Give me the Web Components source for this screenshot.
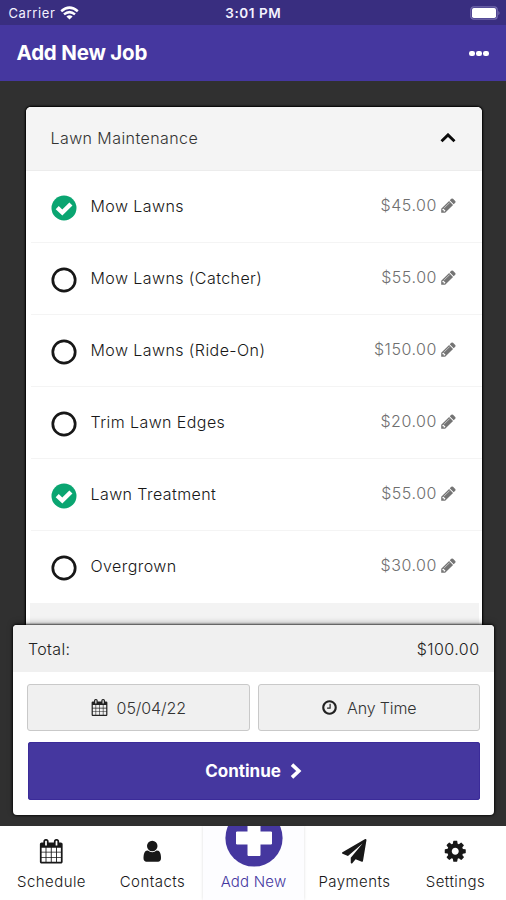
<!DOCTYPE html>
<html lang="en">
<head>
<meta charset="utf-8">
<title>Add New Job</title>
<style>
html,body{margin:0;height:100%;overflow:hidden}
body{font-family:Inter,"Liberation Sans",sans-serif;background:#303030;color:#2b2b2b}
</style>
</head>
<body>
<job-app></job-app>
<script>
const ICONS = {
  pencil:'M491 1536l91-91-235-235-91 91v107h128v128h107zm523-928q0-22-22-22-10 0-17 7l-542 542q-7 7-7 17 0 22 22 22 10 0 17-7l542-542q7-7 7-17zm-54-192l416 416-832 832h-416v-416zm683 96q0 53-37 90l-166 166-416-416 166-165q36-38 90-38 53 0 91 38l235 234q37 39 37 91z',
  calendar:'M192 1664h288v-288h-288v288zm352 0h320v-288h-320v288zm-352-352h288v-320h-288v320zm352 0h320v-320h-320v320zm-352-384h288v-288h-288v288zm736 736h320v-288h-320v288zm-384-736h320v-288h-320v288zm768 736h288v-288h-288v288zm-384-352h320v-320h-320v320zm-352-864v-288q0-13-9.5-22.5t-22.5-9.5h-64q-13 0-22.5 9.5t-9.5 22.5v288q0 13 9.5 22.5t22.5 9.5h64q13 0 22.5-9.5t9.5-22.5zm736 864h288v-320h-288v320zm-384-384h320v-288h-320v288zm384 0h288v-288h-288v288zm32-480v-288q0-13-9.5-22.5t-22.5-9.5h-64q-13 0-22.5 9.5t-9.5 22.5v288q0 13 9.5 22.5t22.5 9.5h64q13 0 22.5-9.5t9.5-22.5zm384-64v1280q0 52-38 90t-90 38h-1408q-52 0-90-38t-38-90v-1280q0-52 38-90t90-38h128v-96q0-66 47-113t113-47h64q66 0 113 47t47 113v96h384v-96q0-66 47-113t113-47h64q66 0 113 47t47 113v96h128q52 0 90 38t38 90z',
  clock:'M1024 544v448q0 14-9 23t-23 9h-320q-14 0-23-9t-9-23v-64q0-14 9-23t23-9h224v-352q0-14 9-23t23-9h64q14 0 23 9t9 23zm416 352q0-148-73-273t-198-198-273-73-273 73-198 198-73 273 73 273 198 198 273 73 273-73 198-198 73-273zm224 0q0 209-103 385.5t-279.5 279.5-385.5 103-385.5-103-279.5-279.5-103-385.5 103-385.5 279.5-279.5 385.5-103 385.5 103 279.5 279.5 103 385.5z',
  user:'M1536 1399q0 109-62.5 187t-150.5 78h-854q-88 0-150.5-78t-62.5-187q0-85 8.5-160.5t31.5-152 58.5-131 94-89 134.5-34.5q131 128 313 128t313-128q76 0 134.5 34.5t94 89 58.5 131 31.5 152 8.5 160.5zm-256-887q0 159-112.5 271.5t-271.5 112.5-271.5-112.5-112.5-271.5 112.5-271.5 271.5-112.5 271.5 112.5 112.5 271.5z',
  plane:'M1764 11q33 24 27 64l-256 1536q-5 29-32 45-14 8-31 8-11 0-24-5l-453-185-242 295q-18 23-49 23-13 0-22-4-19-7-30.5-23.5t-11.5-36.5v-349l864-1059-1069 925-395-162q-37-14-40-55-2-40 32-59l1664-960q15-9 32-9 20 0 36 11z',
  cog:'M1152 896q0-106-75-181t-181-75-181 75-75 181 75 181 181 75 181-75 75-181zm512-109v222q0 12-8 23t-20 13l-185 28q-19 54-39 91 35 50 107 138 10 12 10 25t-9 23q-27 37-99 108t-94 71q-12 0-26-9l-138-108q-44 23-91 38-16 136-29 186-7 28-36 28h-222q-14 0-24.5-8.5t-11.5-21.5l-28-184q-49-16-90-37l-141 107q-10 9-25 9-14 0-25-11-126-114-165-168-7-10-7-23 0-12 8-23 15-21 51-66.5t54-70.5q-27-50-41-99l-183-27q-13-2-21-12.5t-8-23.5v-222q0-12 8-23t19-13l186-28q14-46 39-92-40-57-107-138-10-12-10-24 0-10 9-23 26-36 98.5-107.5t94.5-71.5q13 0 26 10l138 107q44-23 91-38 16-136 29-186 7-28 36-28h222q14 0 24.5 8.5t11.5 21.5l28 184q49 16 90 37l142-107q9-9 24-9 13 0 25 10 129 119 165 170 7 8 7 22 0 12-8 23-15 21-51 66.5t-54 70.5q26 50 41 98l183 28q13 2 21 12.5t8 23.5z'
};
const define = (name, html) => customElements.define(name, class extends HTMLElement {
  constructor(){
    super();
    this.attachShadow({mode:'open'}).innerHTML = typeof html === 'function' ? html(this) : html;
  }
});

define('fa-icon', el => `<style>:host{display:block;flex:none;width:var(--size,17px);height:var(--size,17px)}svg{display:block;width:100%;height:100%;overflow:visible}</style>
<svg viewBox="0 0 1792 1792" fill="currentColor"><path d="${ICONS[el.getAttribute('name')]}"/></svg>`);

define('status-bar', `<style>
:host{display:grid;grid-template-columns:1fr auto 1fr;align-items:center;height:25px;background:#392e80;color:#f4f2ff;font-size:13px;padding:1px 5px 0 8.5px;box-sizing:border-box}
.l{display:flex;align-items:center;gap:5px;letter-spacing:.62px}
.t{font-weight:600;letter-spacing:.55px;font-size:13.5px;margin-right:3px}
.b{justify-self:end}svg{display:block}
</style>
<div class="l"><span>Carrier</span><svg width="19" height="14" viewBox="0 0 19 14" fill="none" stroke="#fff" stroke-width="2.5"><path d="M1.2 5.2Q9.5-2 17.8 5.2M4 8.4Q9.5 3.8 15 8.4"/><path d="M9.5 13.6L6.4 10.5Q9.5 8 12.6 10.5Z" fill="#fff" stroke="none"/></svg></div>
<span class="t">3:01 PM</span>
<svg class="b" width="31" height="14" viewBox="0 0 31 14"><rect x=".8" y=".8" width="26.4" height="12.4" rx="3" fill="none" stroke="#756caf" stroke-width="1.2"/><rect x="2" y="2" width="24" height="10" rx="1.8" fill="#fff"/><path d="M28.5 4.7Q30.4 7 28.5 9.3Z" fill="#8d86bd"/></svg>`);

define('app-header', `<style>
:host{display:flex;align-items:center;justify-content:space-between;height:56px;box-sizing:border-box;padding:0 17px 1px 16.5px;background:#45379f;color:#fff}
h1{margin:0;font-size:20.5px;font-weight:700;letter-spacing:-.2px;line-height:28px}
.d{display:flex;gap:1.2px;padding-top:2px}
i{width:5.8px;height:5.8px;border-radius:2.2px;background:#fff}
</style><h1><slot></slot></h1><div class="d"><i></i><i></i><i></i></div>`);

define('service-row', el => `<style>
:host{display:flex;align-items:center;height:72px;box-sizing:border-box;border-bottom:1px solid #f4f4f4;margin-left:5px;padding:0 25px 0 19.5px;font-size:16px;font-weight:300}
:host([last]){border-bottom-color:#fff}
svg{display:block;margin-top:2px}
.n{flex:1;padding-left:14px;letter-spacing:.42px;margin-top:-1px;color:#181818}
.p{color:#6f6f6f;letter-spacing:.55px;margin-top:-3px}
fa-icon{color:#747474;margin:-3px 0 0 2.5px}
</style>
<svg width="26" height="26" viewBox="0 0 26 26">${el.hasAttribute('checked')
 ? '<circle cx="13" cy="13" r="12.5" fill="#0aa571"/><path d="M6.2 12.6L11.3 17.5L19.9 9" fill="none" stroke="#fff" stroke-width="4.4"/>'
 : '<circle cx="13" cy="13" r="11.2" fill="#fff" stroke="#171717" stroke-width="2.7"/>'}</svg>
<span class="n"><slot></slot></span><span class="p">${el.getAttribute('price')}</span><fa-icon name="pencil"></fa-icon>`);

define('service-card', `<style>
:host{display:block;flex:1;margin:0 24.5px 0 26px;background:#fff;border-radius:5px 5px 0 0;box-shadow:0 0 2px 1px #000;overflow:hidden}
header{display:flex;align-items:center;justify-content:space-between;height:64px;box-sizing:border-box;padding:0 26px 2px 24.5px;background:#f4f4f4;border-bottom:1px solid #ececec;font-size:16px;font-weight:300;letter-spacing:.42px;color:#333}
.more{height:30px;margin:0 3px 0 4px;background:#f3f3f3}
</style>
<header><slot name="title"></slot><svg width="16" height="10" viewBox="0 0 16 10"><path d="M1.5 8.2L8 1.9L14.5 8.2" fill="none" stroke="#0b0b0b" stroke-width="2.9"/></svg></header>
<slot></slot><div class="more"></div>`);

define('pick-button', el => `<style>
:host{display:flex;flex:1;align-items:center;justify-content:center;height:47px;box-sizing:border-box;border:1px solid #c9c9c9;border-radius:3px;background:#f0f0f0;gap:9px;color:#222;font-size:16px;font-weight:300}
span{color:#333}
</style><fa-icon name="${el.getAttribute('icon')}"></fa-icon><span><slot></slot></span>`);

define('total-panel', `<style>
:host{position:absolute;left:13px;right:12px;top:544px;height:190px;box-sizing:border-box;background:#fff;border-radius:4px;box-shadow:0 0 2px 1px #000a,0 -2px 6px #0004}
.total{display:flex;justify-content:space-between;align-items:center;height:47px;box-sizing:border-box;padding:0 14.5px 0 15px;background:#f0f0f0;border-radius:4px 4px 0 0;font-size:16px;font-weight:300;color:#222}
.picks{display:flex;gap:8px;padding:12px 14px 11px}
.go{display:flex;align-items:center;justify-content:center;gap:9px;height:58px;margin:0 14.5px;border-radius:3px;background:#45379f;box-shadow:inset 0 0 0 1px #3b2b99;color:#fff;font-weight:700;font-size:17px;letter-spacing:0}
</style>
<div class="total"><span style="letter-spacing:.35px">Total:</span><span style="letter-spacing:.45px">$100.00</span></div>
<div class="picks"><pick-button icon="calendar" style="letter-spacing:-.1px">05/04/22</pick-button><pick-button icon="clock" style="letter-spacing:-.15px">Any Time</pick-button></div>
<div class="go"><span>Continue</span><svg width="12" height="16" viewBox="0 0 12 16"><path d="M2 1.6L8.8 8L2 14.4" fill="none" stroke="#fff" stroke-width="3.6"/></svg></div>`);

define('tab-item', el => `<style>
:host{display:flex;flex:1 1 0;flex-direction:column;align-items:center;box-sizing:border-box;padding-top:13px;color:#181818;font-size:15px;overflow:hidden}
:host([active]){padding-top:0;color:#45379f;background:#fdfdff;box-shadow:0 0 3px #0002}
fa-icon{--size:24.5px}
.plus{display:block;margin-top:-17px;height:58px;flex:none}
.t{font-weight:300;letter-spacing:.45px;line-height:20px;margin-top:8px}
:host([active]) .t{margin-top:5px;letter-spacing:.2px}
</style>${el.hasAttribute('active')
 ? '<svg class="plus" width="58" height="58" viewBox="0 0 58 58"><circle cx="29" cy="29" r="28.6" fill="#45379f"/><path d="M23 11.5h12v11.5H46.5v12H35V46.5h-12V35H11.5v-12h11.5z" fill="#fff" stroke="#fff" stroke-linejoin="round"/></svg>'
 : `<fa-icon name="${el.getAttribute('icon')}"></fa-icon>`}<span class="t"><slot></slot></span>`);

define('tab-bar', `<style>:host{display:flex;height:74px;background:#fff;position:relative;padding-left:1px;box-sizing:border-box}</style><slot></slot>`);

define('job-app', `<style>
:host{display:flex;flex-direction:column;width:506px;height:900px;overflow:hidden}
main{position:relative;flex:1;display:flex;flex-direction:column;min-height:0;padding-top:26px;box-sizing:border-box;overflow:hidden;background:#303030}
service-card{flex:none;height:520px}
</style>
<status-bar></status-bar>
<app-header>Add New Job</app-header>
<main>
<service-card><span slot="title">Lawn Maintenance</span>
<service-row checked price="$45.00">Mow Lawns</service-row>
<service-row price="$55.00">Mow Lawns (Catcher)</service-row>
<service-row price="$150.00">Mow Lawns (Ride-On)</service-row>
<service-row price="$20.00">Trim Lawn Edges</service-row>
<service-row checked price="$55.00">Lawn Treatment</service-row>
<service-row last price="$30.00">Overgrown</service-row>
</service-card>
<total-panel></total-panel>
</main>
<tab-bar>
<tab-item icon="calendar">Schedule</tab-item><tab-item icon="user">Contacts</tab-item><tab-item active>Add New</tab-item><tab-item icon="plane">Payments</tab-item><tab-item icon="cog">Settings</tab-item>
</tab-bar>`);
</script>
</body>
</html>
